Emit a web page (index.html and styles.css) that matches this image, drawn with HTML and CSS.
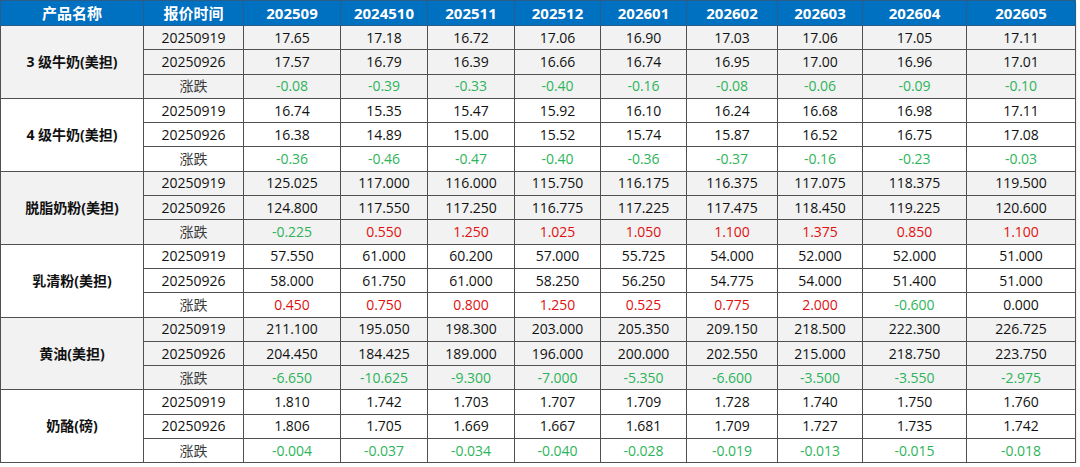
FILE: index.html
```html
<!DOCTYPE html>
<html lang="zh">
<head>
<meta charset="utf-8">
<link rel="stylesheet" href="styles.css">
</head>
<body>
<table class="price-table">
  <colgroup>
    <col class="c-name"><col class="c-date">
    <col class="c1"><col class="c2"><col class="c3"><col class="c4"><col class="c5">
    <col class="c6"><col class="c7"><col class="c8"><col class="c9">
  </colgroup>
  <thead>
    <tr>
      <th>产品名称</th><th>报价时间</th><th>202509</th><th>2024510</th><th>202511</th><th>202512</th><th>202601</th><th>202602</th><th>202603</th><th>202604</th><th>202605</th>
    </tr>
  </thead>
  <tbody class="shade">
    <tr><td class="name" rowspan="3">3 级牛奶(美担)</td><td>20250919</td><td>17.65</td><td>17.18</td><td>16.72</td><td>17.06</td><td>16.90</td><td>17.03</td><td>17.06</td><td>17.05</td><td>17.11</td></tr>
    <tr><td>20250926</td><td>17.57</td><td>16.79</td><td>16.39</td><td>16.66</td><td>16.74</td><td>16.95</td><td>17.00</td><td>16.96</td><td>17.01</td></tr>
    <tr><td class="lbl">涨跌</td><td class="dn">-0.08</td><td class="dn">-0.39</td><td class="dn">-0.33</td><td class="dn">-0.40</td><td class="dn">-0.16</td><td class="dn">-0.08</td><td class="dn">-0.06</td><td class="dn">-0.09</td><td class="dn">-0.10</td></tr>
  </tbody>
  <tbody>
    <tr><td class="name" rowspan="3">4 级牛奶(美担)</td><td>20250919</td><td>16.74</td><td>15.35</td><td>15.47</td><td>15.92</td><td>16.10</td><td>16.24</td><td>16.68</td><td>16.98</td><td>17.11</td></tr>
    <tr><td>20250926</td><td>16.38</td><td>14.89</td><td>15.00</td><td>15.52</td><td>15.74</td><td>15.87</td><td>16.52</td><td>16.75</td><td>17.08</td></tr>
    <tr><td class="lbl">涨跌</td><td class="dn">-0.36</td><td class="dn">-0.46</td><td class="dn">-0.47</td><td class="dn">-0.40</td><td class="dn">-0.36</td><td class="dn">-0.37</td><td class="dn">-0.16</td><td class="dn">-0.23</td><td class="dn">-0.03</td></tr>
  </tbody>
  <tbody class="shade">
    <tr><td class="name" rowspan="3">脱脂奶粉(美担)</td><td>20250919</td><td>125.025</td><td>117.000</td><td>116.000</td><td>115.750</td><td>116.175</td><td>116.375</td><td>117.075</td><td>118.375</td><td>119.500</td></tr>
    <tr><td>20250926</td><td>124.800</td><td>117.550</td><td>117.250</td><td>116.775</td><td>117.225</td><td>117.475</td><td>118.450</td><td>119.225</td><td>120.600</td></tr>
    <tr><td class="lbl">涨跌</td><td class="dn">-0.225</td><td class="up">0.550</td><td class="up">1.250</td><td class="up">1.025</td><td class="up">1.050</td><td class="up">1.100</td><td class="up">1.375</td><td class="up">0.850</td><td class="up">1.100</td></tr>
  </tbody>
  <tbody>
    <tr><td class="name" rowspan="3">乳清粉(美担)</td><td>20250919</td><td>57.550</td><td>61.000</td><td>60.200</td><td>57.000</td><td>55.725</td><td>54.000</td><td>52.000</td><td>52.000</td><td>51.000</td></tr>
    <tr><td>20250926</td><td>58.000</td><td>61.750</td><td>61.000</td><td>58.250</td><td>56.250</td><td>54.775</td><td>54.000</td><td>51.400</td><td>51.000</td></tr>
    <tr><td class="lbl">涨跌</td><td class="up">0.450</td><td class="up">0.750</td><td class="up">0.800</td><td class="up">1.250</td><td class="up">0.525</td><td class="up">0.775</td><td class="up">2.000</td><td class="dn">-0.600</td><td>0.000</td></tr>
  </tbody>
  <tbody class="shade">
    <tr><td class="name" rowspan="3">黄油(美担)</td><td>20250919</td><td>211.100</td><td>195.050</td><td>198.300</td><td>203.000</td><td>205.350</td><td>209.150</td><td>218.500</td><td>222.300</td><td>226.725</td></tr>
    <tr><td>20250926</td><td>204.450</td><td>184.425</td><td>189.000</td><td>196.000</td><td>200.000</td><td>202.550</td><td>215.000</td><td>218.750</td><td>223.750</td></tr>
    <tr><td class="lbl">涨跌</td><td class="dn">-6.650</td><td class="dn">-10.625</td><td class="dn">-9.300</td><td class="dn">-7.000</td><td class="dn">-5.350</td><td class="dn">-6.600</td><td class="dn">-3.500</td><td class="dn">-3.550</td><td class="dn">-2.975</td></tr>
  </tbody>
  <tbody>
    <tr><td class="name" rowspan="3">奶酪(磅)</td><td>20250919</td><td>1.810</td><td>1.742</td><td>1.703</td><td>1.707</td><td>1.709</td><td>1.728</td><td>1.740</td><td>1.750</td><td>1.760</td></tr>
    <tr><td>20250926</td><td>1.806</td><td>1.705</td><td>1.669</td><td>1.667</td><td>1.681</td><td>1.709</td><td>1.727</td><td>1.735</td><td>1.742</td></tr>
    <tr><td class="lbl">涨跌</td><td class="dn">-0.004</td><td class="dn">-0.037</td><td class="dn">-0.034</td><td class="dn">-0.040</td><td class="dn">-0.028</td><td class="dn">-0.019</td><td class="dn">-0.013</td><td class="dn">-0.015</td><td class="dn">-0.018</td></tr>
  </tbody>
</table>
</body>
</html>
```

FILE: styles.css
```css
html, body {
  margin: 0;
  padding: 0;
  background: #ffffff;
}

.price-table {
  border-collapse: collapse;
  table-layout: fixed;
  width: 1076px;
  font-family: "Open Sans", "Noto Sans CJK SC", sans-serif;
  font-size: 14px;
  color: #111111;
  box-shadow: 0 3px 2px #d0d0d0;
}

.c-name { width: 143px; }
.c-date { width: 100px; }
.c1 { width: 97px; }
.c2 { width: 87px; }
.c3 { width: 87px; }
.c4 { width: 86px; }
.c5 { width: 86px; }
.c6 { width: 91px; }
.c7 { width: 85px; }
.c8 { width: 104px; }
.c9 { width: 109px; }

.price-table th,
.price-table td {
  border: 1px solid #505050;
  text-align: center;
  vertical-align: middle;
  padding: 0;
  white-space: nowrap;
  line-height: 18px;
}

.price-table thead tr {
  height: 25px;
}

.price-table th {
  background: #0070c0;
  color: #ffffff;
  font-weight: 700;
  font-size: 15px;
  border-color: #2a5d8a;
}

.price-table tbody tr {
  height: 24.3px;
}

.price-table tbody.shade td {
  background: #f2f2f2;
}

.price-table td.name {
  font-weight: 700;
  color: #111;
}

.price-table td.lbl {
  color: #3a3a3a;
}

.price-table td.dn {
  color: #2db45a;
}

.price-table td.up {
  color: #e01010;
}
```
